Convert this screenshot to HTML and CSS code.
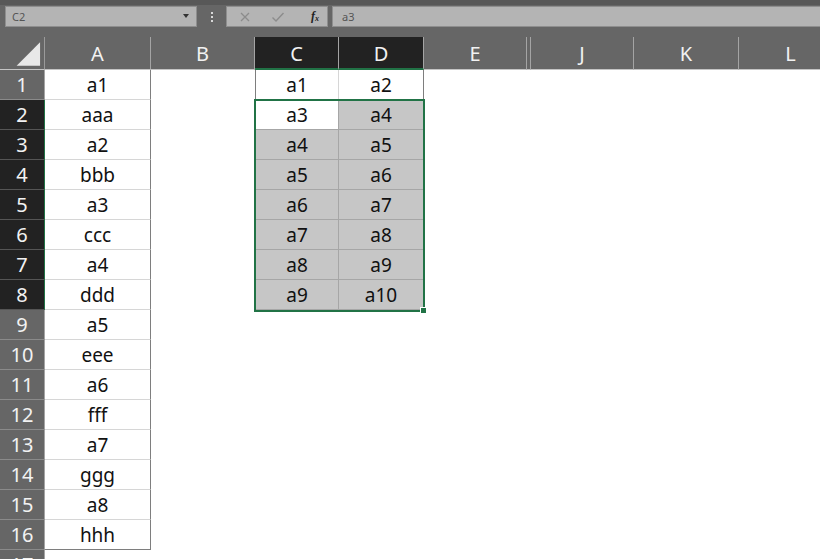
FILE: index.html
```
<!DOCTYPE html>
<html>
<head>
<meta charset="utf-8">
<link rel="stylesheet" href="styles.css">
</head>
<body>
<div class="topbar">
  <div class="namebox">C2<span class="ddarrow"></span></div>
  <div class="dots"><i></i><i></i><i></i></div>
  <div class="fxbtns">
    <svg class="ico" width="12" height="12" viewBox="0 0 12 12"><path d="M2 2 L10 10 M10 2 L2 10" stroke="#8c8c8c" stroke-width="1.3" fill="none"/></svg>
    <svg class="ico" width="14" height="12" viewBox="0 0 14 12"><path d="M1.5 6.5 L5 10 L12.5 2" stroke="#8c8c8c" stroke-width="1.4" fill="none"/></svg>
    <span class="fx">f<sub>x</sub></span>
  </div>
  <div class="finput">a3</div>
</div>
<div class="colhdr">
  <div class="h corner"><svg width="45" height="32" viewBox="0 0 45 32"><polygon points="41,5 41,29 17,29" fill="#e8e8e8"/></svg></div>
  <div class="h wa">A</div>
  <div class="h wb">B</div>
  <div class="h wc sel">C</div>
  <div class="h wd sel">D</div>
  <div class="h we">E</div>
  <div class="h wfi"></div>
  <div class="h wj">J</div>
  <div class="h wk">K</div>
  <div class="h wl">L</div>
</div>
<div class="grid">
  <div class="row"><div class="rh">1</div><div class="c ca">a1</div><div class="c cb b1"></div><div class="c cc r1c">a1</div><div class="c cd r1d">a2</div></div>
  <div class="row"><div class="rh sel">2</div><div class="c ca">aaa</div><div class="c cb"></div><div class="c cc rs active">a3</div><div class="c cd rs">a4</div></div>
  <div class="row"><div class="rh sel">3</div><div class="c ca">a2</div><div class="c cb"></div><div class="c cc rs">a4</div><div class="c cd rs">a5</div></div>
  <div class="row"><div class="rh sel">4</div><div class="c ca">bbb</div><div class="c cb"></div><div class="c cc rs">a5</div><div class="c cd rs">a6</div></div>
  <div class="row"><div class="rh sel">5</div><div class="c ca">a3</div><div class="c cb"></div><div class="c cc rs">a6</div><div class="c cd rs">a7</div></div>
  <div class="row"><div class="rh sel">6</div><div class="c ca">ccc</div><div class="c cb"></div><div class="c cc rs">a7</div><div class="c cd rs">a8</div></div>
  <div class="row"><div class="rh sel">7</div><div class="c ca">a4</div><div class="c cb"></div><div class="c cc rs">a8</div><div class="c cd rs">a9</div></div>
  <div class="row"><div class="rh sel">8</div><div class="c ca">ddd</div><div class="c cb"></div><div class="c cc rs">a9</div><div class="c cd rs">a10</div></div>
  <div class="row"><div class="rh">9</div><div class="c ca">a5</div></div>
  <div class="row"><div class="rh">10</div><div class="c ca">eee</div></div>
  <div class="row"><div class="rh">11</div><div class="c ca">a6</div></div>
  <div class="row"><div class="rh">12</div><div class="c ca">fff</div></div>
  <div class="row"><div class="rh">13</div><div class="c ca">a7</div></div>
  <div class="row"><div class="rh">14</div><div class="c ca">ggg</div></div>
  <div class="row"><div class="rh">15</div><div class="c ca">a8</div></div>
  <div class="row"><div class="rh">16</div><div class="c ca last">hhh</div></div>
  <div class="row"><div class="rh">17</div><div class="c ca blank"></div></div>
  <div class="selbox"></div>
  <div class="handle"></div>
</div>
</body>
</html>
```
FILE: styles.css
```
* { box-sizing: border-box; margin: 0; padding: 0; }
html, body { width: 820px; height: 559px; overflow: hidden; }
body { background: #fff; font-family: "Noto Sans", "Open Sans", sans-serif; }

.topbar {
  height: 37px;
  background: #666;
  border-top: 5px solid #585858;
  padding-top: 1px;
  display: flex;
  align-items: flex-start;
}
.namebox {
  position: relative;
  margin-left: 5px;
  width: 192px;
  height: 21px;
  background: #b4b4b4;
  border: 1px solid #8e8e8e;
  font-size: 11px;
  color: #555;
  display: flex;
  align-items: center;
  padding-left: 6px;
}
.ddarrow {
  position: absolute;
  right: 7px;
  top: 7px;
  width: 0; height: 0;
  border-left: 3.5px solid transparent;
  border-right: 3.5px solid transparent;
  border-top: 4px solid #333;
}
.dots {
  width: 29px;
  height: 21px;
  display: flex;
  flex-direction: column;
  align-items: center;
  justify-content: center;
  gap: 2px;
}
.dots i { display: block; width: 2px; height: 2px; background: #d8d8d8; }
.fxbtns {
  width: 102px;
  height: 21px;
  background: #b4b4b4;
  border: 1px solid #8e8e8e;
  display: flex;
  align-items: center;
  padding-left: 12px;
}
.fxbtns .ico { display: block; }
.fxbtns .ico + .ico { margin-left: 20px; }
.fx {
  margin-left: 26px;
  font-family: "Liberation Serif", serif;
  font-style: italic;
  font-weight: bold;
  font-size: 12px;
  color: #222;
  line-height: 1;
}
.fx sub { font-size: 8px; vertical-align: -1px; }
.finput {
  margin-left: 4px;
  flex: 1;
  height: 21px;
  background: #b4b4b4;
  border: 1px solid #8e8e8e;
  border-right: none;
  font-size: 11px;
  color: #555;
  display: flex;
  align-items: center;
  padding-left: 9px;
}

.colhdr {
  display: flex;
  height: 33px;
  background: #666;
}
.h {
  height: 33px;
  border-right: 1px solid #a4a4a4;
  border-bottom: 1px solid #c4c4c4;
  color: #f2f2f2;
  font-size: 20px;
  display: flex;
  align-items: center;
  justify-content: center;
  flex: none;
}
.h.sel { background: #222; border-bottom: 2px solid #217346; padding-top: 1px; }
.corner { width: 45px; border-right-color: #9a9a9a; align-items: flex-start; }
.corner svg { display: block; }
.wa { width: 106px; }
.wb { width: 104px; }
.wc { width: 84px; }
.wd { width: 85px; }
.we { width: 103px; }
.wfi { width: 4px; }
.wj { width: 103px; }
.wk { width: 105px; }
.wl { width: 104px; }

.grid { position: relative; }
.row { display: flex; height: 30px; }
.rh {
  width: 45px;
  height: 30px;
  flex: none;
  background: #666;
  color: #f2f2f2;
  font-size: 20px;
  border-right: 1px solid #a4a4a4;
  border-bottom: 1px solid #8a8a8a;
  display: flex;
  align-items: center;
  justify-content: center;
}
.rh.sel { background: #222; border-right-color: #217346; border-bottom-color: #555; }

.c {
  height: 30px;
  flex: none;
  font-size: 19px;
  color: #111;
  display: flex;
  align-items: center;
  justify-content: center;
}
.ca { width: 106px; border-right: 1px solid #7e7e7e; border-bottom: 1px solid #d6d6d6; }
.ca.last { border-bottom-color: #7e7e7e; }
.ca.blank { border-right-color: transparent; border-bottom: none; }
.cb { width: 104px; }
.cc { width: 84px; border-left: 1px solid transparent; }
.cd { width: 85px; }
.r1c { border-left-color: #7e7e7e; border-right: 1px solid #d6d6d6; }
.r1d { border-right: 1px solid #7e7e7e; }
.rs { background: #c6c6c6; border-right: 1px solid #a6a6a6; border-bottom: 1px solid #a6a6a6; }
.rs.active { background: #fff; }

.selbox {
  position: absolute;
  left: 254px;
  top: 29px;
  width: 171px;
  height: 213px;
  border: 2px solid #217346;
}
.handle {
  position: absolute;
  left: 420px;
  top: 237px;
  width: 7px;
  height: 7px;
  background: #217346;
  border: 1px solid #fff;
}
```
